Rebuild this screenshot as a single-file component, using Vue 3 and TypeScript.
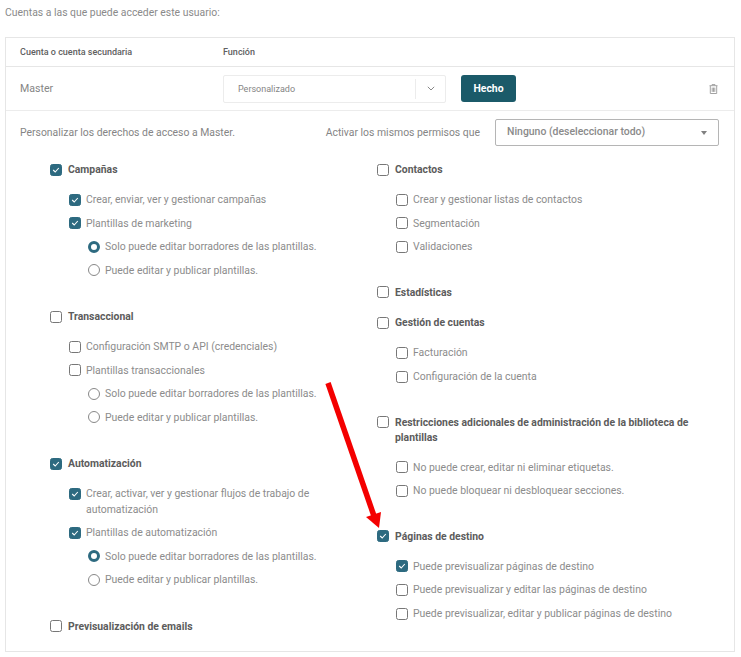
<script setup lang="ts">
interface Opt { label: string; on?: boolean }
interface Sub { label: string; on?: boolean; radios?: Opt[] }
interface Group { label: string; on?: boolean; subs?: Sub[]; cls?: string }

const radios = (first: boolean): Opt[] => [
  { label: 'Solo puede editar borradores de las plantillas.', on: first },
  { label: 'Puede editar y publicar plantillas.' },
]

const leftCol: Group[] = [
  { label: 'Campañas', on: true, subs: [
    { label: 'Crear, enviar, ver y gestionar campañas', on: true },
    { label: 'Plantillas de marketing', on: true, radios: radios(true) },
  ] },
  { label: 'Transaccional', subs: [
    { label: 'Configuración SMTP o API (credenciales)' },
    { label: 'Plantillas transaccionales', radios: radios(false) },
  ] },
  { label: 'Automatización', on: true, subs: [
    { label: 'Crear, activar, ver y gestionar flujos de trabajo de automatización', on: true },
    { label: 'Plantillas de automatización', on: true, radios: radios(true) },
  ] },
  { label: 'Previsualización de emails' },
]

const rightCol: Group[] = [
  { label: 'Contactos', subs: [
    { label: 'Crear y gestionar listas de contactos' },
    { label: 'Segmentación' },
    { label: 'Validaciones' },
  ] },
  { label: 'Estadísticas', cls: 'tight' },
  { label: 'Gestión de cuentas', subs: [
    { label: 'Facturación' },
    { label: 'Configuración de la cuenta' },
  ] },
  { label: 'Restricciones adicionales de administración de la biblioteca de plantillas', subs: [
    { label: 'No puede crear, editar ni eliminar etiquetas.' },
    { label: 'No puede bloquear ni desbloquear secciones.' },
  ] },
  { label: 'Páginas de destino', on: true, subs: [
    { label: 'Puede previsualizar páginas de destino', on: true },
    { label: 'Puede previsualizar y editar las páginas de destino' },
    { label: 'Puede previsualizar, editar y publicar páginas de destino' },
  ] },
]
const columns = [leftCol, rightCol]
</script>

<template>
  <div class="page">
    <p class="intro">Cuentas a las que puede acceder este usuario:</p>
    <section class="card">
      <div class="head">
        <span class="col-a">Cuenta o cuenta secundaria</span>
        <span>Función</span>
      </div>
      <div class="master">
        <span class="col-a name">Master</span>
        <div class="role">
          <span class="role-text">Personalizado</span>
          <span class="role-caret">
            <svg width="8" height="5" viewBox="0 0 8 5"><path d="M.8.8L4 4l3.2-3.2" fill="none" stroke="#888" stroke-width="1" /></svg>
          </span>
        </div>
        <button class="done">Hecho</button>
        <svg class="trash" width="9" height="10" viewBox="0 0 9 10">
          <path d="M0.5 1.7h8M3 1.5V.6h3v.9M1.3 2v7.5h6.4V2M3.2 3.6v4.3M4.5 3.6v4.3M5.8 3.6v4.3" fill="none" stroke="#a3a3a3" stroke-width="1" />
        </svg>
      </div>
      <div class="perm-bar">
        <span class="perm-text">Personalizar los derechos de acceso a Master.</span>
        <div class="perm-right">
          <span class="perm-text">Activar los mismos permisos que</span>
          <div class="same">
            <span class="same-text">Ninguno (deseleccionar todo)</span>
            <i class="tri"></i>
          </div>
        </div>
      </div>
      <div class="cols">
        <div v-for="(col, c) in columns" :key="c" class="col">
          <div v-for="g in col" :key="g.label" class="group" :class="g.cls">
            <div class="row top">
              <span class="box" :class="{ on: g.on }">
                <svg v-if="g.on" width="8" height="6" viewBox="0 0 8 6"><path d="M1.2 3l2 2 3.6-4" fill="none" stroke="#fff" stroke-width="1.1" /></svg>
              </span>
              <span class="group-label">{{ g.label }}</span>
            </div>
            <div v-if="g.subs" class="subs">
              <template v-for="s in g.subs" :key="s.label">
                <div class="row sub">
                  <span class="box" :class="{ on: s.on }">
                    <svg v-if="s.on" width="8" height="6" viewBox="0 0 8 6"><path d="M1.2 3l2 2 3.6-4" fill="none" stroke="#fff" stroke-width="1.1" /></svg>
                  </span>
                  <span class="sub-label">{{ s.label }}</span>
                </div>
                <div v-for="r in s.radios" :key="r.label" class="row radio-row">
                  <span class="radio" :class="{ on: r.on }"></span>
                  <span class="sub-label">{{ r.label }}</span>
                </div>
              </template>
            </div>
          </div>
        </div>
      </div>
    </section>
    <svg class="arrow" width="70" height="160" viewBox="0 0 70 160">
      <path d="M5 2L51 135" fill="none" stroke="#f40000" stroke-width="5.5" />
      <path d="M43 136L58 131L56 147Z" fill="#f40000" />
    </svg>
  </div>
</template>

<style scoped>
.page {
  position: relative;
  width: 741px;
  height: 657px;
  overflow: hidden;
  background: #fff;
  font-family: Roboto, "Liberation Sans", sans-serif;
  color: #7d7d7d;
  font-size: 11px;
}
.intro {
  margin: 0;
  padding: 6px 0 0 5px;
  height: 37px;
  box-sizing: border-box;
  line-height: 14px;
  font-size: 10.4px;
  color: #8a8a8a;
}
.card {
  margin-left: 5px;
  width: 730px;
  height: 615px;
  box-sizing: border-box;
  border: 1px solid #e6e6e6;
}
.head {
  display: flex;
  align-items: center;
  height: 28px;
  border-bottom: 1px solid #e6e6e6;
  font-size: 9px;
  font-weight: 500;
  color: #606060;
  box-sizing: content-box;
}
.col-a {
  width: 203px;
  padding-left: 14px;
  flex: none;
}
.master {
  display: flex;
  align-items: center;
  height: 43px;
  border-bottom: 1px solid #ececec;
}
.name {
  font-size: 10.6px;
  color: #858585;
}
.role {
  display: flex;
  align-items: center;
  width: 223px;
  height: 28px;
  border: 1px solid #ececec;
  border-radius: 2px;
  box-sizing: border-box;
}
.role-text {
  flex: 1;
  padding-left: 14px;
  font-size: 9px;
  color: #858585;
}
.role-caret {
  display: flex;
  align-items: center;
  justify-content: center;
  width: 29px;
  height: 20px;
  border-left: 1px solid #ececec;
}
.done {
  margin-left: 15px;
  width: 55px;
  height: 27px;
  border: 0;
  border-radius: 3px;
  background: #1b5a69;
  color: #fff;
  font: 700 10.4px Roboto, "Liberation Sans", sans-serif;
  padding: 0;
}
.trash {
  margin-left: 193px;
}
.perm-bar {
  display: flex;
  justify-content: space-between;
  align-items: center;
  height: 42px;
  padding: 0 15px 0 14px;
}
.perm-text {
  font-size: 10.42px;
  color: #858585;
}
.perm-right {
  display: flex;
  align-items: center;
  gap: 15px;
}
.same {
  display: flex;
  justify-content: space-between;
  align-items: center;
  width: 224px;
  height: 27px;
  padding: 0 11px 0 11px;
  box-sizing: border-box;
  border: 1px solid #b5b5b5;
  border-radius: 2px;
  font-size: 10.45px;
  font-weight: 500;
  color: #8a8a8a;
  margin-top: 1px;
}
.same-text {
  padding-bottom: 2px;
}
.tri {
  width: 0;
  height: 0;
  border-left: 3.5px solid transparent;
  border-right: 3.5px solid transparent;
  border-top: 4px solid #808080;
}
.cols {
  display: flex;
  padding: 9px 0 0 44px;
}
.col:first-child {
  width: 327px;
  flex: none;
}
.col:last-child {
  width: 324px;
  flex: none;
}
.group {
  margin-bottom: 26.6px;
}
.col:last-child .group {
  margin-bottom: 26px;
}
.col:last-child .group.tight {
  margin-bottom: 15.6px;
}
.row {
  display: flex;
  align-items: flex-start;
  line-height: 15.6px;
}
.top {
  gap: 6px;
  line-height: 15px;
}
.group-label {
  font-size: 10.4px;
  font-weight: 700;
  color: #5c5c5c;
}
.subs {
  padding-top: 11px;
}
.sub {
  padding: 4px 0 4px 19px;
  gap: 5px;
}
.radio-row {
  padding: 4px 0 4px 38px;
  gap: 5px;
}
.sub-label {
  font-size: 10.45px;
  color: #8c8c8c;
}
.box {
  flex: none;
  display: flex;
  align-items: center;
  justify-content: center;
  width: 12px;
  height: 12px;
  margin-top: 1.6px;
  box-sizing: border-box;
  border: 1px solid #777;
  border-radius: 2.5px;
  background: #fff;
}
.box.on {
  background: #2d6a80;
  border-color: #2d6a80;
}
.radio {
  flex: none;
  width: 12px;
  height: 12px;
  margin-top: 1.6px;
  box-sizing: border-box;
  border: 1px solid #888;
  border-radius: 50%;
}
.radio.on {
  border: 3.5px solid #2d6a80;
}
.arrow {
  position: absolute;
  left: 323px;
  top: 381px;
}
</style>
